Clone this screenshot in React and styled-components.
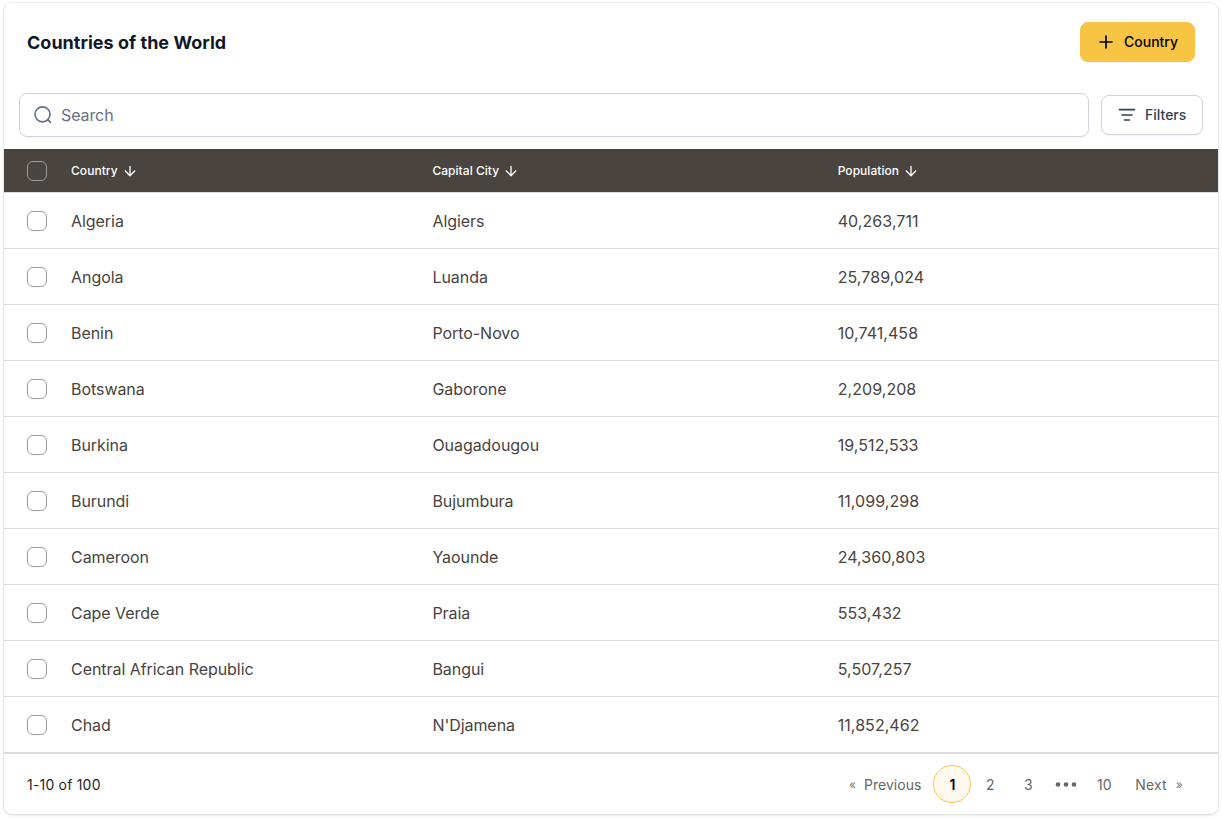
import React from 'react';
import styled, { createGlobalStyle } from 'styled-components';

const GlobalStyle = createGlobalStyle`
  *, *::before, *::after { box-sizing: border-box; }
  body {
    margin: 0;
    background: #fff;
    font-family: Inter, "Liberation Sans", sans-serif;
    -webkit-font-smoothing: antialiased;
  }
  button, input { font-family: inherit; margin: 0; }
  svg { flex: none; }
`;

const Page = styled.main`
  min-height: 819px;
  padding: 3px 4px 5px;
`;

const Card = styled.section`
  height: 811px;
  border-radius: 8px;
  background: #fff;
  box-shadow: 0 0 0 1px rgba(16, 24, 40, 0.05), 0 1px 3px rgba(16, 24, 40, 0.14);
  overflow: hidden;
`;

const CardHeader = styled.header`
  display: flex;
  align-items: center;
  justify-content: space-between;
  height: 78px;
  padding: 0 23px;
`;

const Title = styled.h1`
  margin: 0;
  padding-top: 2px;
  font-size: 18px;
  line-height: 28px;
  font-weight: 700;
  letter-spacing: 0.02px;
  color: #101828;
`;

const Button = styled.button`
  display: flex;
  align-items: center;
  gap: ${({ $primary }) => ($primary ? 9 : 8)}px;
  width: ${({ $primary }) => ($primary ? 115 : 102)}px;
  height: 40px;
  padding: 0 15px;
  border: 1px solid ${({ $primary }) => ($primary ? '#f8c444' : '#d0d5dd')};
  border-radius: 8px;
  background: ${({ $primary }) => ($primary ? '#f8c444' : '#fff')};
  box-shadow: 0 1px 2px rgba(16, 24, 40, 0.05);
  color: ${({ $primary }) => ($primary ? '#000' : '#344054')};
  font-size: 14px;
  line-height: 20px;
  font-weight: 500;
  white-space: nowrap;
`;

const Toolbar = styled.div`
  display: flex;
  align-items: center;
  gap: 12px;
  height: 68px;
  padding: 0 15px;
`;

const SearchBox = styled.label`
  display: flex;
  align-items: center;
  gap: 8px;
  flex: 1;
  height: 44px;
  padding: 0 13px;
  border: 1px solid #d0d5dd;
  border-radius: 8px;
  box-shadow: 0 1px 2px rgba(16, 24, 40, 0.05);
  color: #667085;
`;

const SearchInput = styled.input`
  flex: 1;
  padding: 0;
  border: 0;
  outline: 0;
  background: transparent;
  font-size: 16px;
  letter-spacing: -0.1px;
  line-height: 24px;
  color: #101828;
  &::placeholder { color: #667085; opacity: 1; }
`;

const Row = styled.div`
  display: grid;
  grid-template-columns: 44px 361.4px 405.3px 1fr;
  align-items: center;
  height: 56px;
  padding-left: 23px;
  border-bottom: 1px solid #dcdcdc;
  color: #484340;
  font-size: 16px;
`;

const HeadRow = styled(Row)`
  height: 44px;
  background: #4a4441;
  color: #fff;
  font-size: 12px;
  font-weight: 500;
`;

const Cell = styled.span`
  line-height: 20px;
  letter-spacing: ${({ $numeric }) => ($numeric ? 0.06 : -0.05)}px;
`;

const HeadCell = styled.div`
  display: flex;
  align-items: center;
  gap: 4px;
  letter-spacing: 0.04px;
`;

const Checkbox = styled.input.attrs({ type: 'checkbox' })`
  appearance: none;
  width: 20px;
  height: 20px;
  border: 1px solid #9b9b9b;
  border-radius: 6px;
`;

const Footer = styled.footer`
  display: flex;
  align-items: center;
  justify-content: space-between;
  height: 61px;
  padding: 0 23px;
  border-top: 1px solid #dcdcdc;
`;

const Range = styled.span`
  font-size: 14px;
  color: #262626;
  letter-spacing: 0.2px;
`;

const Pagination = styled.nav`
  display: flex;
  align-items: center;
`;

const PageButton = styled.button`
  display: flex;
  align-items: center;
  justify-content: center;
  width: 38px;
  height: 38px;
  padding: 0;
  border: 1px solid ${({ $active }) => ($active ? '#f8c444' : 'transparent')};
  border-radius: 50%;
  background: ${({ $active }) => ($active ? '#fff9f0' : 'transparent')};
  color: ${({ $active }) => ($active ? '#000' : '#666')};
  font-size: 14px;
  font-weight: ${({ $active }) => ($active ? 600 : 400)};
`;

const StepButton = styled(PageButton)`
  width: auto;
  gap: ${({ $end }) => ($end ? 9 : 8)}px;
  padding: 0 12px 0 ${({ $end }) => ($end ? 12 : 0)}px;
  border: 0;
  letter-spacing: ${({ $end }) => ($end ? 0.15 : 0.02)}px;
`;

const ArrowDown = () => (
  <svg width="16" height="16" viewBox="0 0 16 16" fill="none" stroke="currentColor" strokeWidth="1.33" strokeLinecap="round" strokeLinejoin="round">
    <path d="M8 3.33v9.34M8 12.67l4.67-4.67M8 12.67L3.33 8" />
  </svg>
);

const PlusIcon = () => (
  <svg width="19" height="20" viewBox="0 0 19 20" fill="none" stroke="currentColor" strokeWidth="1.67" strokeLinecap="round">
    <path d="M10 4v12M4 10h12" />
  </svg>
);

const FilterIcon = () => (
  <svg width="20" height="20" viewBox="0 0 20 20" fill="none" stroke="currentColor" strokeWidth="1.67" strokeLinecap="round">
    <path d="M2.5 4.7h15M5 10h10M7.5 15h5" />
  </svg>
);

const SearchIcon = () => (
  <svg width="20" height="20" viewBox="0 0 20 20" fill="none" stroke="currentColor" strokeWidth="1.67" strokeLinecap="round">
    <circle cx="9.5" cy="9.3" r="7.5" />
    <path d="M17.5 17.3l-2.7-2.7" />
  </svg>
);

const Dots = () => (
  <svg width="22" height="6" viewBox="0 0 22 6" fill="currentColor">
    <circle cx="3" cy="3.5" r="2.3" />
    <circle cx="11" cy="3.5" r="2.3" />
    <circle cx="19" cy="3.5" r="2.3" />
  </svg>
);

const Chevrons = styled.span`
  font-size: 12px;
  color: #777;
`;

const columns = ['Country', 'Capital City', 'Population'];

const countries = [
  ['Algeria', 'Algiers', '40,263,711'],
  ['Angola', 'Luanda', '25,789,024'],
  ['Benin', 'Porto-Novo', '10,741,458'],
  ['Botswana', 'Gaborone', '2,209,208'],
  ['Burkina', 'Ouagadougou', '19,512,533'],
  ['Burundi', 'Bujumbura', '11,099,298'],
  ['Cameroon', 'Yaounde', '24,360,803'],
  ['Cape Verde', 'Praia', '553,432'],
  ['Central African Republic', 'Bangui', '5,507,257'],
  ['Chad', "N'Djamena", '11,852,462'],
];

export default function App() {
  return (
    <>
      <GlobalStyle />
      <Page>
        <Card>
          <CardHeader>
            <Title>Countries of the World</Title>
            <Button $primary><PlusIcon />Country</Button>
          </CardHeader>
          <Toolbar>
            <SearchBox>
              <SearchIcon />
              <SearchInput placeholder="Search" />
            </SearchBox>
            <Button><FilterIcon />Filters</Button>
          </Toolbar>
          <HeadRow>
            <Checkbox />
            {columns.map((name) => (
              <HeadCell key={name}>{name}<ArrowDown /></HeadCell>
            ))}
          </HeadRow>
          {countries.map(([country, capital, population]) => (
            <Row key={country}>
              <Checkbox />
              <Cell>{country}</Cell>
              <Cell>{capital}</Cell>
              <Cell $numeric>{population}</Cell>
            </Row>
          ))}
          <Footer>
            <Range>1-10 of 100</Range>
            <Pagination>
              <StepButton><Chevrons>«</Chevrons>Previous</StepButton>
              <PageButton $active>1</PageButton>
              <PageButton>2</PageButton>
              <PageButton>3</PageButton>
              <PageButton><Dots /></PageButton>
              <PageButton>10</PageButton>
              <StepButton $end>Next<Chevrons>»</Chevrons></StepButton>
            </Pagination>
          </Footer>
        </Card>
      </Page>
    </>
  );
}
